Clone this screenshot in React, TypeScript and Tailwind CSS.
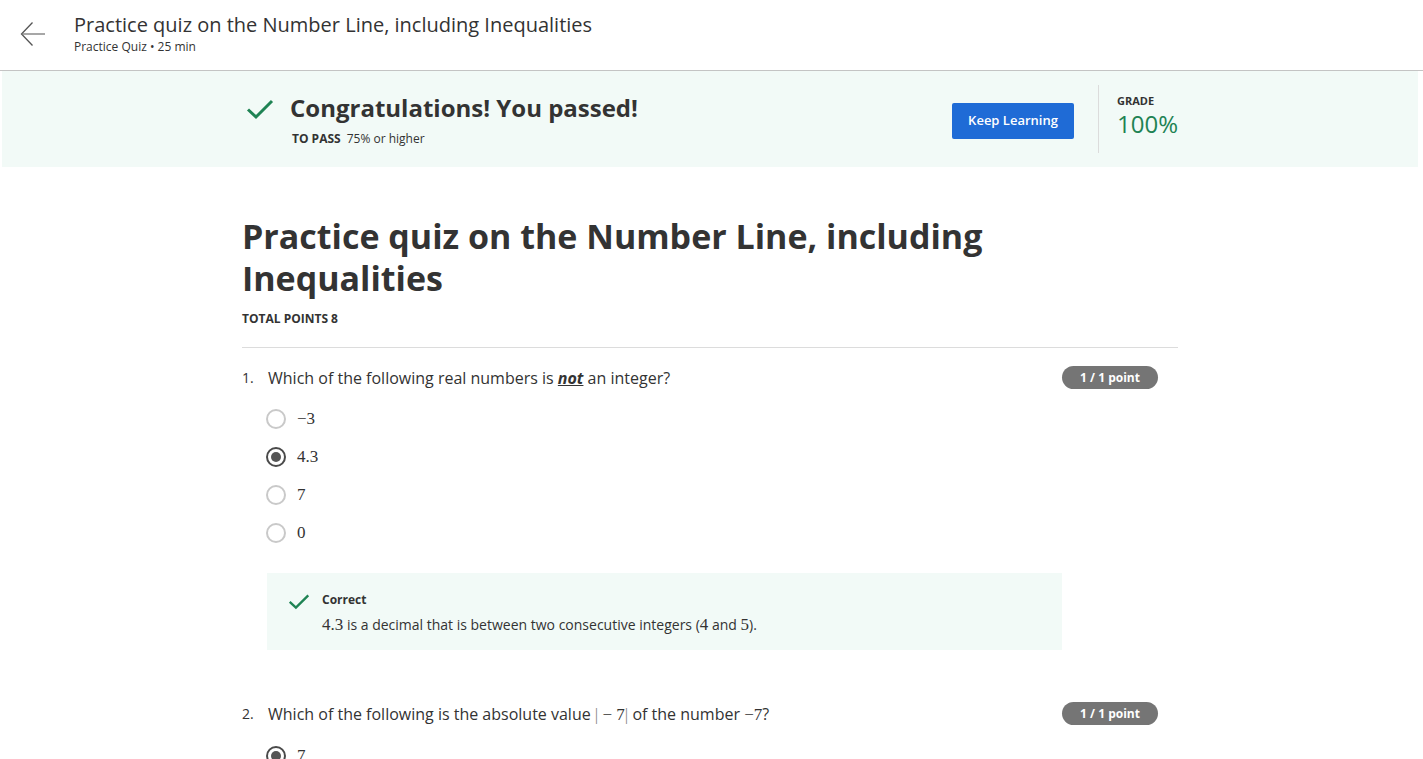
const font = { fontFamily: '"Open Sans", "Liberation Sans", sans-serif' };

function Check({ className }: { className?: string }) {
  return (
    <svg viewBox="0 0 28 22" className={className} fill="none">
      <path d="M2 11.5 L10 19 L26 3" stroke="#1f8354" strokeWidth="3" />
    </svg>
  );
}

function BackArrow() {
  return (
    <svg width="26" height="26" viewBox="0 0 26 26" fill="none">
      <path d="M12.5 1.5 L1.5 13 L12.5 24.5" stroke="#555" strokeWidth="1.3" />
      <path d="M1.5 13 H25" stroke="#777" strokeWidth="1.3" />
    </svg>
  );
}

function Math({ children }: { children: React.ReactNode }) {
  return (
    <span className="font-['Liberation_Serif',serif] text-[17px]">{children}</span>
  );
}

function Radio({ checked, label }: { checked?: boolean; label: React.ReactNode }) {
  return (
    <div className="flex items-center h-[38px]">
      <div
        className={
          checked
            ? "w-5 h-5 rounded-full border-2 border-[#4a4a4a] flex items-center justify-center"
            : "w-5 h-5 rounded-full border-2 border-[#c9c9c9]"
        }
      >
        {checked && <div className="w-[10px] h-[10px] rounded-full bg-[#555]" />}
      </div>
      <span className="ml-[11px] text-[#333]">{label}</span>
    </div>
  );
}

function Badge() {
  return (
    <div className="w-[96px] h-[23px] rounded-full bg-[#757575] text-white text-[12px] font-bold flex items-center justify-center shrink-0">
      1 / 1 point
    </div>
  );
}

export default function App() {
  return (
    <div className="bg-white min-h-screen text-[#333]" style={font}>
      {/* Header */}
      <header className="h-[71px] border-b border-[#c4c4c4] flex items-start">
        <div className="pl-[20px] pt-[21px]">
          <BackArrow />
        </div>
        <div className="ml-[28px] pt-[11px]">
          <h1 className="text-[20px] leading-[28px] text-[#333]">
            Practice quiz on the Number Line, including Inequalities
          </h1>
          <p className="text-[12px] leading-[16px] text-[#333]">Practice Quiz • 25 min</p>
        </div>
      </header>

      {/* Passed banner */}
      <section className="ml-[2px] mr-[5px] bg-[#f2faf7] h-[96px] flex items-center">
        <div className="w-[936px] ml-[240px] flex items-center justify-between">
          <div className="flex items-start">
            <Check className="w-[28px] h-[22px] mt-[6px] ml-[4px]" />
            <div className="ml-[16px]">
              <h2 className="text-[24px] leading-[32px] font-bold text-[#333]">
                Congratulations! You passed!
              </h2>
              <p className="text-[12px] leading-[16px] mt-[7px] ml-[2px]">
                <span className="font-bold">TO PASS</span>
                <span className="ml-[6px]">75% or higher</span>
              </p>
            </div>
          </div>
          <div className="flex items-center">
            <button className="w-[122px] h-[36px] mt-[4px] rounded-[2px] bg-[#1f6bd6] text-white text-[13px] font-semibold">
              Keep Learning
            </button>
            <div className="w-px h-[68px] bg-[#dcdcdc] ml-[24px]" />
            <div className="ml-[18px] w-[61px] -mt-[6px]">
              <p className="text-[11px] leading-[16px] font-bold text-[#333]">GRADE</p>
              <p className="text-[24px] leading-[30px] text-[#1f8354]">100%</p>
            </div>
          </div>
        </div>
      </section>

      {/* Quiz body */}
      <main className="w-[936px] ml-[242px] pt-[48px]">
        <h1 className="text-[34px] leading-[42px] font-bold text-[#333] max-w-[800px]">
          Practice quiz on the Number Line, including Inequalities
        </h1>
        <p className="text-[12px] leading-[16px] font-bold mt-[12px]">TOTAL POINTS 8</p>
        <div className="h-px bg-[#dcdcdc] mt-[20px]" />

        {/* Question 1 */}
        <div className="mt-[18px] flex items-start justify-between pr-[20px]">
          <div className="flex items-start">
            <span className="text-[14px] leading-[24px] w-[26px]">1.</span>
            <p className="text-[16px] leading-[24px]">
              Which of the following real numbers is{" "}
              <span className="font-bold italic underline">not</span> an integer?
            </p>
          </div>
          <Badge />
        </div>
        <div className="ml-[24px] mt-[10px] flex flex-col">
          <Radio label={<Math>−3</Math>} />
          <Radio checked label={<Math>4.3</Math>} />
          <Radio label={<Math>7</Math>} />
          <Radio label={<Math>0</Math>} />
        </div>
        <div className="ml-[25px] mr-[116px] mt-[21px] bg-[#f2faf7] h-[77px] flex items-start pt-[19px] pl-[21px]">
          <Check className="w-[22px] h-[17px] mt-[1px]" />
          <div className="ml-[12px]">
            <p className="text-[12px] leading-[16px] font-bold">Correct</p>
            <p className="text-[14px] leading-[20px] mt-[7px]">
              <Math>4.3</Math> is a decimal that is between two consecutive integers (
              <Math>4</Math> and <Math>5</Math>).
            </p>
          </div>
        </div>

        {/* Question 2 */}
        <div className="mt-[52px] flex items-start justify-between pr-[20px]">
          <div className="flex items-start">
            <span className="text-[14px] leading-[24px] w-[26px]">2.</span>
            <p className="text-[16px] leading-[24px]">
              Which of the following is the absolute value{" "}
              <Math>
                <span className="text-[#888]">|</span> − 7<span className="text-[#888]">|</span>
              </Math>{" "}
              of the number <Math>−7</Math>?
            </p>
          </div>
          <Badge />
        </div>
        <div className="ml-[24px] mt-[10px] flex flex-col">
          <Radio checked label={<Math>7</Math>} />
          <Radio label={<Math>−7</Math>} />
        </div>
      </main>
    </div>
  );
}
